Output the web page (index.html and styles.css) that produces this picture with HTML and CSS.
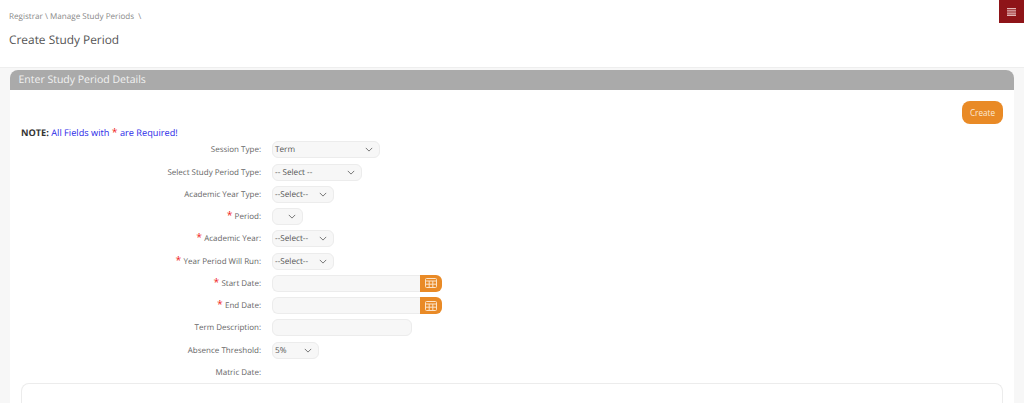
FILE: index.html
```html
<!DOCTYPE html>
<html lang="en">
<head>
  <meta charset="UTF-8" />
  <title>Create Study Period</title>
  <link rel="stylesheet" href="styles.css">
</head>
<body>
  <header class="page-head">
    <div class="crumbs">Registrar \ Manage Study Periods &nbsp;\</div>
    <h1>Create Study Period</h1>
    <button class="menu-btn" type="button" aria-label="Menu">
      <svg width="9" height="8" viewBox="0 0 9 8"><path d="M0 0h9v1.3H0zM0 2.2h9v1.3H0zM0 4.4h9v1.3H0zM0 6.6h9v1.3H0z" fill="#e3b5b5"/></svg>
    </button>
  </header>

  <section class="panel">
    <div class="panel-title">Enter Study Period Details</div>
    <div class="panel-body">
      <div class="actions"><button class="btn-create" type="button">Create</button></div>
      <p class="note"><b>NOTE:</b> All Fields with <span class="star">*</span> are Required!</p>

      <form class="fields">
        <div class="row">
          <label>Session Type:</label>
          <div class="select w-108"><span>Term</span><svg class="chev" viewBox="0 0 10 6"><path d="M1 1l4 4 4-4"/></svg></div>
        </div>
        <div class="row">
          <label>Select Study Period Type:</label>
          <div class="select w-90"><span>-- Select --</span><svg class="chev" viewBox="0 0 10 6"><path d="M1 1l4 4 4-4"/></svg></div>
        </div>
        <div class="row">
          <label>Academic Year Type:</label>
          <div class="select w-62"><span>--Select--</span><svg class="chev" viewBox="0 0 10 6"><path d="M1 1l4 4 4-4"/></svg></div>
        </div>
        <div class="row">
          <label><span class="star">*</span> Period:</label>
          <div class="select w-31"><span></span><svg class="chev" viewBox="0 0 10 6"><path d="M1 1l4 4 4-4"/></svg></div>
        </div>
        <div class="row">
          <label><span class="star">*</span> Academic Year:</label>
          <div class="select w-62"><span>--Select--</span><svg class="chev" viewBox="0 0 10 6"><path d="M1 1l4 4 4-4"/></svg></div>
        </div>
        <div class="row">
          <label><span class="star">*</span> Year Period Will Run:</label>
          <div class="select w-62"><span>--Select--</span><svg class="chev" viewBox="0 0 10 6"><path d="M1 1l4 4 4-4"/></svg></div>
        </div>
        <div class="row">
          <label><span class="star">*</span> Start Date:</label>
          <div class="date">
            <div class="date-input"></div>
            <div class="date-btn"><svg width="12" height="10" viewBox="0 0 12 10"><path d="M.5 1.5a1 1 0 0 1 1-1h9a1 1 0 0 1 1 1v7a1 1 0 0 1-1 1h-9a1 1 0 0 1-1-1zM.5 3h11M.5 6.2h11M4.2 3v6.5M7.8 3v6.5"/></svg></div>
          </div>
        </div>
        <div class="row">
          <label><span class="star">*</span> End Date:</label>
          <div class="date">
            <div class="date-input"></div>
            <div class="date-btn"><svg width="12" height="10" viewBox="0 0 12 10"><path d="M.5 1.5a1 1 0 0 1 1-1h9a1 1 0 0 1 1 1v7a1 1 0 0 1-1 1h-9a1 1 0 0 1-1-1zM.5 3h11M.5 6.2h11M4.2 3v6.5M7.8 3v6.5"/></svg></div>
          </div>
        </div>
        <div class="row">
          <label>Term Description:</label>
          <div class="text-input"></div>
        </div>
        <div class="row">
          <label>Absence Threshold:</label>
          <div class="select w-47"><span>5%</span><svg class="chev" viewBox="0 0 10 6"><path d="M1 1l4 4 4-4"/></svg></div>
        </div>
        <div class="row">
          <label>Matric Date:</label>
        </div>
      </form>

      <div class="matric-box"></div>
    </div>
  </section>
</body>
</html>
```

FILE: styles.css
```css
html, body {
  height: 100%;
  overflow: hidden;
}

body {
  font-family: "Open Sans", "Noto Sans", sans-serif;
  text-rendering: geometricPrecision;
  background: #f7f7f7;
  margin: 0;
  color: #555;
}

.page-head {
  position: relative;
  background: #ffffff;
  height: 68px;
  padding: 11px 0 0 9px;
  box-sizing: border-box;
  border-bottom: 1px solid #eeeeee;
}

.crumbs {
  font-size: 8.1px;
  line-height: 12px;
  color: #888;
}

h1 {
  margin: 8px 0 0;
  font-size: 11.9px;
  line-height: 18px;
  font-weight: 400;
  color: #555;
}

.menu-btn {
  position: absolute;
  top: 0;
  right: 0;
  width: 25px;
  height: 23px;
  padding: 0;
  border: none;
  background: #8e1418;
  display: flex;
  align-items: center;
  justify-content: center;
}

.panel {
  margin: 2px 10px 0;
  background: #ffffff;
  border-radius: 8px 8px 0 0;
}

.panel-title {
  background: #aaaaaa;
  color: #f2f2f2;
  height: 20px;
  line-height: 20px;
  padding-left: 8.5px;
  font-size: 10.5px;
  border-radius: 8px 8px 0 0;
}

.panel-body {
  padding: 11px 11px 0;
}

.actions {
  display: flex;
  justify-content: flex-end;
}

.btn-create {
  width: 41px;
  height: 23px;
  padding: 0;
  border: none;
  border-radius: 8px;
  background: #e98a26;
  color: #fbe9d5;
  font-family: inherit;
  font-size: 8.2px;
}

.note {
  margin: 2px 0 0;
  font-size: 9.2px;
  line-height: 13px;
  color: #2a2ae8;
}

.note b {
  color: #333;
}

.star {
  color: #f01c1c;
  font-size: 10.5px;
  line-height: 0;
}

.fields {
  margin-top: -3px;
}

.row {
  display: flex;
  align-items: center;
  height: 17px;
  margin-top: 5.28px;
}

.row label {
  width: 240px;
  margin-right: 11px;
  text-align: right;
  font-size: 8px;
  color: #666;
}

.select, .date-input, .text-input {
  box-sizing: border-box;
  height: 17px;
  background: #f7f7f7;
  border: 1px solid #ececec;
  border-radius: 6px;
}

.select {
  display: flex;
  align-items: center;
  justify-content: space-between;
  padding: 0 6px 0 2px;
  font-size: 8.2px;
  color: #555;
}

.chev {
  width: 8px;
  height: 5px;
  fill: none;
  stroke: #666;
  stroke-width: 1.1;
}

.w-108 { width: 108px; }
.w-90 { width: 90px; }
.w-62 { width: 62px; }
.w-47 { width: 47px; }
.w-31 { width: 31px; }

.date {
  display: flex;
  width: 170px;
}

.date-input {
  flex: 1;
  border-radius: 6px 0 0 6px;
  border-right: none;
}

.date-btn {
  width: 22px;
  height: 17px;
  background: #e98a26;
  border-radius: 0 6px 6px 0;
  display: flex;
  align-items: center;
  justify-content: center;
}

.date-btn svg {
  fill: none;
  stroke: #fbe3c8;
  stroke-width: 1;
}

.text-input {
  width: 140px;
}

.matric-box {
  box-sizing: border-box;
  height: 20px;
  margin-top: 2px;
  border: 1px solid #ececec;
  border-bottom: none;
  border-radius: 8px 8px 0 0;
}
```
